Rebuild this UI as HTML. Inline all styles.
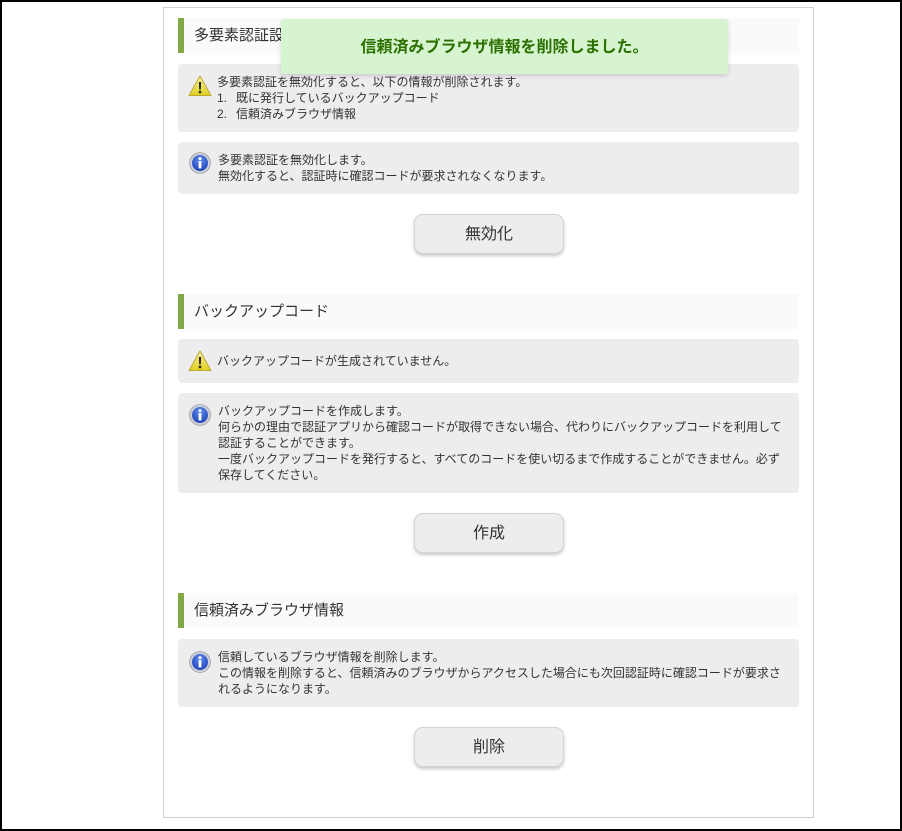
<!DOCTYPE html>
<html lang="ja"><head><meta charset="utf-8"><style>
html,body{margin:0;padding:0;background:#fff}
body{width:902px;height:831px;position:relative;overflow:hidden;font-family:"Liberation Sans","Noto Sans CJK JP",sans-serif;color:#333}
.a{position:absolute;box-sizing:border-box}
.h{left:178px;width:621px;height:35px;background:#fafafa;border-left:6px solid #82a845;padding-left:10px;font-size:15px;line-height:35px;white-space:nowrap;color:#333}
.b{left:178px;width:621px;background:#ededed;border-radius:4px}
.t{left:218px;width:570px;font-size:12px;line-height:16px;color:#333}
.btn{left:414px;width:150px;height:40px;background:#ededed;border:1px solid #d4d4d4;border-radius:9px;box-shadow:0 2px 3px rgba(0,0,0,.22);text-align:center;font-size:16px;line-height:40px;color:#333}
.n{display:inline-block;width:19px}
svg{position:absolute}
</style></head><body>
<svg width="0" height="0" style="position:absolute"><defs>
<linearGradient id="y" x1="0" y1="0" x2="0" y2="1"><stop offset="0" stop-color="#f8f2a8"/><stop offset="1" stop-color="#e2cf1e"/></linearGradient>
<radialGradient id="bl" cx=".5" cy=".3" r=".75"><stop offset="0" stop-color="#5f8cf0"/><stop offset="1" stop-color="#1a3fb5"/></radialGradient>
<symbol id="w" viewBox="0 0 24 22"><path d="M12 1 L23 20.5 H1 Z" fill="url(#y)" stroke="#b9a92e" stroke-width="1" stroke-linejoin="round"/><path d="M10.9 7h2.2l-.3 7.5h-1.6z" fill="#222"/><rect x="10.8" y="15.8" width="2.4" height="2.4" fill="#222"/></symbol>
<symbol id="i" viewBox="0 0 22 22"><circle cx="11" cy="11" r="10.4" fill="#cfcfd6" stroke="#9a9aa5" stroke-width=".8"/><circle cx="11" cy="11" r="8" fill="url(#bl)"/><circle cx="11" cy="6.6" r="1.5" fill="#fff"/><rect x="9.6" y="9" width="2.8" height="7.4" fill="#fff"/></symbol>
</defs></svg>

<div class="a" style="left:163px;top:7px;width:651px;height:811px;border:1px solid #d0d0d0"></div>

<div class="a h" style="top:18px">多要素認証設定</div>
<div class="a b" style="top:64px;height:68px"></div>
<svg style="left:188px;top:75px" width="24" height="22"><use href="#w"/></svg>
<div class="a t" style="left:217px;top:74px">多要素認証を無効化すると、以下の情報が削除されます。<br><span class="n">1.</span>既に発行しているバックアップコード<br><span class="n">2.</span>信頼済みブラウザ情報</div>
<div class="a b" style="top:142px;height:52px"></div>
<svg style="left:189px;top:152px" width="22" height="22"><use href="#i"/></svg>
<div class="a t" style="top:152px">多要素認証を無効化します。<br>無効化すると、認証時に確認コードが要求されなくなります。</div>
<div class="a btn" style="top:214px">無効化</div>

<div class="a h" style="top:294px">バックアップコード</div>
<div class="a b" style="top:339px;height:44px"></div>
<svg style="left:188px;top:350px" width="24" height="22"><use href="#w"/></svg>
<div class="a t" style="left:217px;top:353px">バックアップコードが生成されていません。</div>
<div class="a b" style="top:393px;height:100px"></div>
<svg style="left:189px;top:404px" width="22" height="22"><use href="#i"/></svg>
<div class="a t" style="top:403px">バックアップコードを作成します。<br>何らかの理由で認証アプリから確認コードが取得できない場合、代わりにバックアップコードを利用して<br>認証することができます。<br>一度バックアップコードを発行すると、すべてのコードを使い切るまで作成することができません。必ず<br>保存してください。</div>
<div class="a btn" style="top:513px">作成</div>

<div class="a h" style="top:593px">信頼済みブラウザ情報</div>
<div class="a b" style="top:639px;height:68px"></div>
<svg style="left:189px;top:651px" width="22" height="22"><use href="#i"/></svg>
<div class="a t" style="top:649px">信頼しているブラウザ情報を削除します。<br>この情報を削除すると、信頼済みのブラウザからアクセスした場合にも次回認証時に確認コードが要求さ<br>れるようになります。</div>
<div class="a btn" style="top:727px">削除</div>

<div class="a" style="left:281px;top:19px;width:447px;height:55px;background:#d7f4d1;border-radius:3px;box-shadow:0 2px 5px rgba(0,0,0,.15);text-align:center;font-size:16px;font-weight:bold;line-height:57px;color:#2c7000;white-space:nowrap">信頼済みブラウザ情報を削除しました。</div>

<div class="a" style="left:0;top:0;width:902px;height:2px;background:#000"></div>
<div class="a" style="left:0;top:0;width:2px;height:831px;background:#000"></div>
<div class="a" style="left:900px;top:0;width:2px;height:831px;background:#000"></div>
<div class="a" style="left:0;top:829px;width:902px;height:2px;background:#000"></div>
</body></html>
